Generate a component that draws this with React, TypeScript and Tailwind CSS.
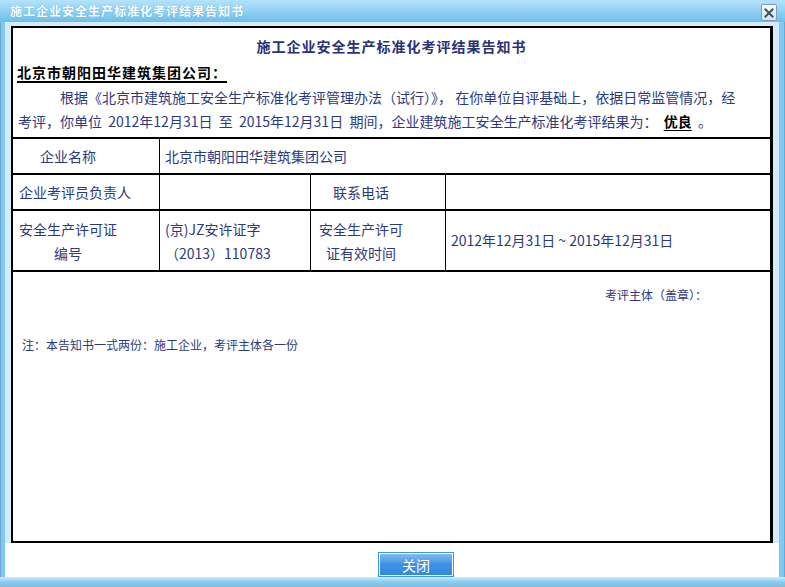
const navy = "text-[#2b3a7e]";

function CloseIcon() {
  return (
    <svg width="10" height="10" viewBox="0 0 10 10">
      <path d="M1.5 1.5 L8.5 8.5 M8.5 1.5 L1.5 8.5" stroke="#44515e" strokeWidth="2" strokeLinecap="square" />
    </svg>
  );
}

export default function App() {
  return (
    <div className="w-[785px] h-[587px] flex flex-col bg-[#7ecaf3] shadow-[inset_0_0_0_1px_#6aa6d2] font-['Noto_Sans_CJK_SC',sans-serif] overflow-hidden">
      {/* title bar */}
      <div className="h-[22px] flex items-center justify-between pl-[10px] pr-[8px] bg-gradient-to-b from-[#b4e3fa] to-[#6cbeec]">
        <span className="text-[12px] font-bold tracking-[1px] text-white leading-none [text-shadow:0_0_1px_#4a9fd4]">
          施工企业安全生产标准化考评结果告知书
        </span>
        <button className="w-[16px] h-[17px] mt-[3px] flex items-center justify-center rounded-[2px] border border-[#7d9fb8] bg-gradient-to-b from-[#f4faff] to-[#cfe5f5]">
          <CloseIcon />
        </button>
      </div>

      {/* body */}
      <div className="flex-1 flex flex-col ml-[5px] mr-[6px]">
        <div className="bg-[#d5ebfb] pt-[4px] px-[6px]">
          <div className={`h-[517px] bg-white border-2 border-r-[3px] border-black flex flex-col ${navy}`}>
            <h1 className="mt-[6px] h-[24px] leading-[24px] text-center text-[14px] font-bold tracking-[1px] text-[#283276]">
              施工企业安全生产标准化考评结果告知书
            </h1>
            <p className="mt-[2px] px-[4px] h-[24px] leading-[24px] text-[14px] font-bold tracking-[1px] text-black">
              <span className="underline underline-offset-[3px] decoration-[1.5px]">北京市朝阳田华建筑集团公司：</span>
            </p>
            <div className="mt-[1px] px-[5px] text-[14px] leading-[24px] whitespace-pre">
              <div className="pl-[42px]">根据《北京市建筑施工安全生产标准化考评管理办法（试行）》， 在你单位自评基础上，依据日常监管情况，经</div>
              <div>
                {"考评，你单位  2012年12月31日  至  2015年12月31日  期间，企业建筑施工安全生产标准化考评结果为：  "}
                <span className="font-bold text-black underline underline-offset-[3px]">优良</span>
                {"  。"}
              </div>
            </div>

            {/* table */}
            <div className="mt-[4px] grid grid-cols-[146px_151px_135px_1fr] grid-rows-[36px_36px_61px] border-b-2 border-black text-[14px]">
              <div className="border-t-2 border-black flex items-center pl-[27px]">企业名称</div>
              <div className="col-span-3 border-t-2 border-l border-black flex items-center pl-[5px]">北京市朝阳田华建筑集团公司</div>

              <div className="border-t-2 border-black flex items-center pl-[6px]">企业考评员负责人</div>
              <div className="border-t-2 border-l border-black" />
              <div className="border-t-2 border-l border-black flex items-center pl-[22px]">联系电话</div>
              <div className="border-t-2 border-l border-black" />

              <div className="border-t-2 border-black flex items-center pl-[6px]">
                <div className="text-center leading-[24px]">
                  安全生产许可证
                  <br />
                  编号
                </div>
              </div>
              <div className="border-t-2 border-l border-black flex flex-col justify-center pl-[5px] leading-[24px]">
                <div>(京)JZ安许证字</div>
                <div>（2013）110783</div>
              </div>
              <div className="border-t-2 border-l border-black flex items-center pl-[8px]">
                <div className="w-[84px] text-center leading-[24px]">
                  安全生产许可
                  <br />
                  证有效时间
                </div>
              </div>
              <div className="border-t-2 border-l border-black flex items-center pl-[5px] whitespace-pre">
                {"2012年12月31日 ~ 2015年12月31日"}
              </div>
            </div>

            <div className="mt-[11px] pl-[592px] h-[24px] leading-[24px] text-[12px]">考评主体（盖章）：</div>
            <div className="mt-[26px] pl-[9px] h-[24px] leading-[24px] text-[12px]">注：本告知书一式两份：施工企业，考评主体各一份</div>
          </div>
        </div>

        <div className="flex-1 bg-white flex items-end pl-[373px]">
          <button className="w-[76px] h-[25px] border border-[#3f95dc] shadow-[inset_0_0_0_1px_#ffffff] bg-gradient-to-b from-[#86c0ef] via-[#3f92e1] to-[#3089dd] text-white text-[14px] leading-none flex items-center justify-center">
            关闭
          </button>
        </div>
      </div>

      {/* bottom frame */}
      <div className="h-[10px] bg-gradient-to-b from-[#d2eafb] via-[#80cdf5] to-[#8fb6d0]" />
    </div>
  );
}
